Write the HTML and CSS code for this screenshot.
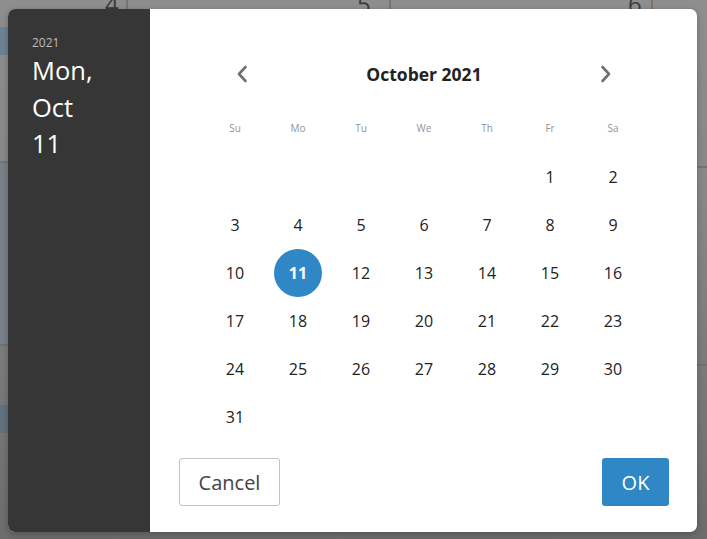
FILE: index.html
```html
<!DOCTYPE html>
<html lang="en">
<head>
<meta charset="utf-8">
<title>Date picker</title>
<link rel="stylesheet" href="styles.css">
</head>
<body>
<div class="backdrop">
  <div class="bg-num n4">4</div>
  <div class="bg-num n5">5</div>
  <div class="bg-num n6">6</div>
  <div class="bg-band b1"></div>
  <div class="bg-band b2"></div>
  <div class="bg-band b3"></div>
  <svg class="bg-lines" width="707" height="539" viewBox="0 0 707 539">
    <g stroke="#6e6e6e" stroke-width="1.5">
      <line x1="127" y1="0" x2="127" y2="10"/>
      <line x1="390" y1="0" x2="390" y2="10"/>
      <line x1="652" y1="0" x2="652" y2="10"/>
      <line x1="119" y1="531" x2="119" y2="539"/>
      <line x1="338" y1="531" x2="338" y2="539"/>
      <line x1="557" y1="531" x2="557" y2="539"/>
      <line x1="0" y1="162" x2="9" y2="162"/>
      <line x1="0" y1="345" x2="9" y2="345"/>
      <line x1="696" y1="167" x2="707" y2="167"/>
      <line x1="696" y1="365" x2="707" y2="365"/>
    </g>
  </svg>
</div>

<div class="dialog">
  <aside class="summary">
    <div class="year">2021</div>
    <div class="date">Mon,<br>Oct<br>11</div>
  </aside>
  <section class="main">
    <div class="nav">
      <button class="arrow" aria-label="Previous month">
        <svg width="12" height="18" viewBox="0 0 12 18"><polyline points="9.5,2 3,9 9.5,16" fill="none" stroke="#707070" stroke-width="2.6" stroke-linecap="round" stroke-linejoin="round"/></svg>
      </button>
      <div class="month">October 2021</div>
      <button class="arrow" aria-label="Next month">
        <svg width="12" height="18" viewBox="0 0 12 18"><polyline points="2.5,2 9,9 2.5,16" fill="none" stroke="#707070" stroke-width="2.6" stroke-linecap="round" stroke-linejoin="round"/></svg>
      </button>
    </div>
    <div class="weekdays">
      <span>Su</span><span>Mo</span><span>Tu</span><span>We</span><span>Th</span><span>Fr</span><span>Sa</span>
    </div>
    <div class="days">
      <span></span><span></span><span></span><span></span><span></span><span class="day">1</span><span class="day">2</span>
      <span class="day">3</span><span class="day">4</span><span class="day">5</span><span class="day">6</span><span class="day">7</span><span class="day">8</span><span class="day">9</span>
      <span class="day">10</span><span class="day selected"><b>11</b></span><span class="day">12</span><span class="day">13</span><span class="day">14</span><span class="day">15</span><span class="day">16</span>
      <span class="day">17</span><span class="day">18</span><span class="day">19</span><span class="day">20</span><span class="day">21</span><span class="day">22</span><span class="day">23</span>
      <span class="day">24</span><span class="day">25</span><span class="day">26</span><span class="day">27</span><span class="day">28</span><span class="day">29</span><span class="day">30</span>
      <span class="day">31</span>
    </div>
    <div class="actions">
      <button class="btn cancel">Cancel</button>
      <button class="btn ok">OK</button>
    </div>
  </section>
</div>
</body>
</html>
```
FILE: styles.css
```css
html, body {
  margin: 0;
  padding: 0;
  width: 707px;
  height: 539px;
  overflow: hidden;
}

body {
  font-family: "Open Sans", "Noto Sans", sans-serif;
  background: linear-gradient(#8e8e8e 0%, #888888 35%, #7a7a7a 70%, #6c6c6c 100%);
  position: relative;
}

.backdrop {
  position: absolute;
  inset: 0;
}

.bg-num {
  position: absolute;
  top: -10px;
  font-size: 24px;
  color: #3c3c3c;
  line-height: 28px;
}
.n4 { left: 105px; }
.n5 { left: 357px; }
.n6 { left: 628px; }

.bg-band {
  position: absolute;
  left: 0;
  width: 10px;
}
.b1 { top: 27px; height: 28px; background: #6d8394; }
.b2 { top: 163px; height: 182px; background: #7b8189; }
.b3 { top: 405px; height: 28px; background: #62717e; }

.bg-lines {
  position: absolute;
  left: 0;
  top: 0;
}

.dialog {
  position: absolute;
  left: 8px;
  top: 9px;
  width: 689px;
  height: 523px;
  display: flex;
  border-radius: 7px;
  overflow: hidden;
  background: #fff;
  box-shadow: 0 2px 6px rgba(0, 0, 0, 0.25);
}

.summary {
  width: 142px;
  flex: none;
  background: #363636;
  color: #fff;
  padding: 26px 0 0 24px;
  box-sizing: border-box;
}

.year {
  font-size: 12px;
  line-height: 16px;
  color: #bdbdbd;
}

.date {
  font-size: 25.5px;
  line-height: 36.6px;
  margin-top: 1px;
}

.main {
  flex: 1;
  display: flex;
  flex-direction: column;
  padding: 49px 28px 26px 29px;
  box-sizing: border-box;
}

.nav {
  width: 404px;
  height: 32px;
  margin: 0 auto;
  display: flex;
  align-items: center;
  justify-content: space-between;
}

.arrow {
  width: 40px;
  height: 32px;
  border: 0;
  background: none;
  padding: 0;
  display: flex;
  align-items: center;
  justify-content: center;
}

.month {
  font-size: 17.5px;
  font-weight: 700;
  color: #222;
}

.weekdays {
  width: 441px;
  margin: 28px auto 0;
  height: 20px;
  display: grid;
  grid-template-columns: repeat(7, 63px);
  align-items: center;
  text-align: center;
  font-size: 10px;
  color: #939393;
}

.days {
  width: 441px;
  margin: 15px auto 0;
  height: 288px;
  display: grid;
  grid-template-columns: repeat(7, 63px);
  grid-template-rows: repeat(6, 48px);
}

.day {
  display: flex;
  align-items: center;
  justify-content: center;
  font-size: 16px;
  color: #222;
}

.day.selected b {
  width: 48px;
  height: 48px;
  border-radius: 50%;
  background: #2f87c6;
  color: #fff;
  font-weight: 700;
  display: flex;
  align-items: center;
  justify-content: center;
}

.actions {
  margin-top: 17px;
  display: flex;
  justify-content: space-between;
}

.btn {
  height: 48px;
  font-family: "Open Sans", "Noto Sans", sans-serif;
  font-size: 20px;
  border-radius: 3px;
  padding: 0;
}

.cancel {
  width: 101px;
  background: #fff;
  border: 1px solid #c2c2c2;
  color: #444;
}

.ok {
  width: 67px;
  background: #2f87c6;
  border: 0;
  color: #fff;
}
```
